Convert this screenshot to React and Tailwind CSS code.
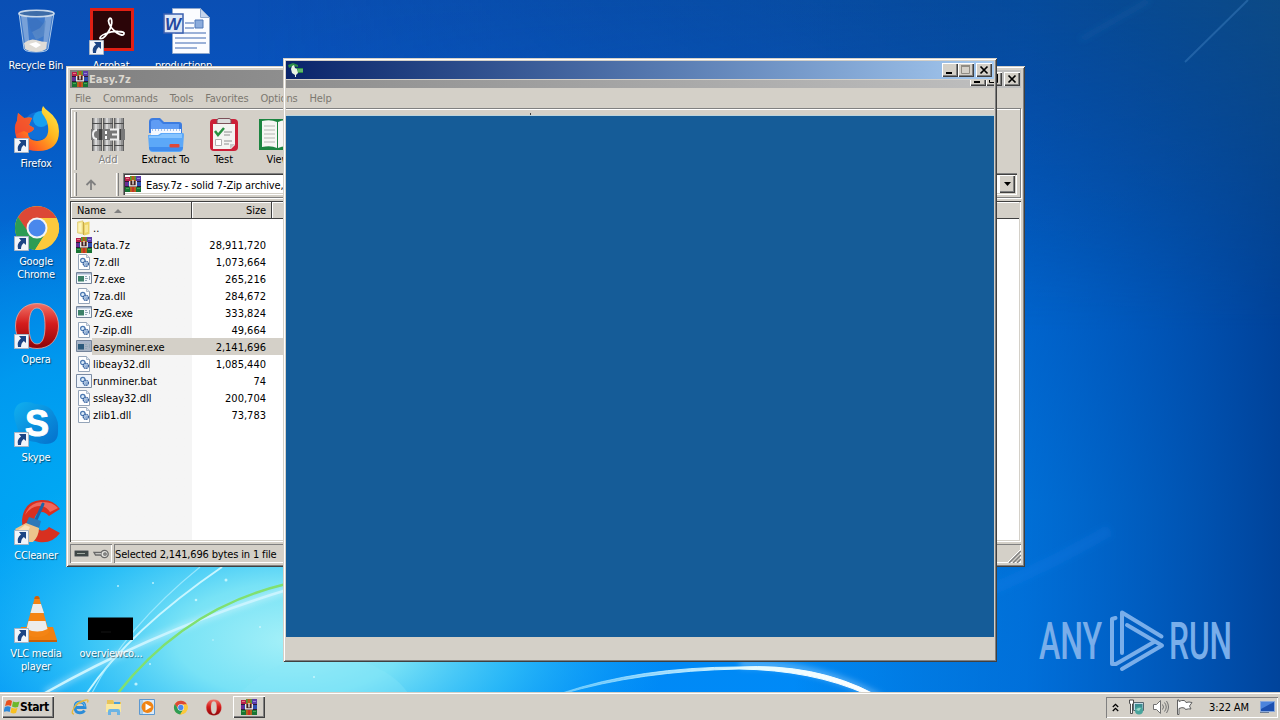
import clsx from 'clsx';

const RAISED = 'bg-[#d4d0c8] shadow-[inset_1px_1px_0_#fff,inset_-1px_-1px_0_#404040,inset_-2px_-2px_0_#808080]';
const SUNKEN = 'shadow-[inset_1px_1px_0_#808080,inset_-1px_-1px_0_#fff]';
const UI_FONT = "font-['DejaVu_Sans_Condensed','DejaVu_Sans',sans-serif] text-[11px] leading-[13px] tracking-[-0.1px]";

const FILES = [
    { name: '..', size: '', type: 'folder' },
    { name: 'data.7z', size: '28,911,720', type: 'rar' },
    { name: '7z.dll', size: '1,073,664', type: 'dll' },
    { name: '7z.exe', size: '265,216', type: 'exe' },
    { name: '7za.dll', size: '284,672', type: 'dll' },
    { name: '7zG.exe', size: '333,824', type: 'exe' },
    { name: '7-zip.dll', size: '49,664', type: 'dll' },
    { name: 'easyminer.exe', size: '2,141,696', type: 'exe', selected: true },
    { name: 'libeay32.dll', size: '1,085,440', type: 'dll' },
    { name: 'runminer.bat', size: '74', type: 'bat' },
    { name: 'ssleay32.dll', size: '200,704', type: 'dll' },
    { name: 'zlib1.dll', size: '73,783', type: 'dll' },
];

const MENU = ['File', 'Commands', 'Tools', 'Favorites', 'Options', 'Help'];

/* ---------- Wallpaper ---------- */

function Wallpaper() {
    return (
        <svg className="absolute inset-0" width="1280" height="720" viewBox="0 0 1280 720">
            <defs>
                <linearGradient id="sky" x1="0" y1="0" x2="0" y2="1">
                    <stop offset="0" stopColor="#0a4fb4" />
                    <stop offset="0.12" stopColor="#0853be" />
                    <stop offset="0.4" stopColor="#0072dc" />
                    <stop offset="0.7" stopColor="#0088ee" />
                    <stop offset="1" stopColor="#008af8" />
                </linearGradient>
                <linearGradient id="dim" x1="0" y1="0" x2="1" y2="0">
                    <stop offset="0.62" stopColor="#00408f" stopOpacity="0" />
                    <stop offset="0.8" stopColor="#004cb4" stopOpacity="0.42" />
                    <stop offset="1" stopColor="#003e94" stopOpacity="0.93" />
                </linearGradient>
                <linearGradient id="topdim" x1="0" y1="0" x2="1" y2="0">
                    <stop offset="0.2" stopColor="#034a98" stopOpacity="0" />
                    <stop offset="0.8" stopColor="#064a92" stopOpacity="0.7" />
                    <stop offset="1" stopColor="#0c4a86" />
                </linearGradient>
                <linearGradient id="fade" x1="0" y1="0" x2="0" y2="1">
                    <stop offset="0" stopColor="#fff" />
                    <stop offset="1" stopColor="#000" />
                </linearGradient>
                <mask id="topmask"><rect width="1280" height="330" fill="url(#fade)" /></mask>
                <radialGradient id="glow">
                    <stop offset="0" stopColor="#a4f0f8" />
                    <stop offset="0.3" stopColor="#7ee6f6" stopOpacity="0.95" />
                    <stop offset="0.6" stopColor="#36c6f8" stopOpacity="0.75" />
                    <stop offset="1" stopColor="#10a8fa" stopOpacity="0" />
                </radialGradient>
                <radialGradient id="left">
                    <stop offset="0" stopColor="#00acf4" stopOpacity="0.95" />
                    <stop offset="0.5" stopColor="#00a6f4" stopOpacity="0.7" />
                    <stop offset="1" stopColor="#00a0f0" stopOpacity="0" />
                </radialGradient>
                <linearGradient id="arc" x1="0" y1="0" x2="1" y2="0">
                    <stop offset="0" stopColor="#8fdcff" stopOpacity="0.6" />
                    <stop offset="0.6" stopColor="#e4faff" />
                    <stop offset="1" stopColor="#fff" />
                </linearGradient>
                <filter id="soft" x="-20%" y="-50%" width="140%" height="200%"><feGaussianBlur stdDeviation="3" /></filter>
                <filter id="soft1"><feGaussianBlur stdDeviation="0.6" /></filter>
            </defs>
            <rect width="1280" height="720" fill="url(#sky)" />
            <rect width="1280" height="720" fill="url(#dim)" />
            <rect width="1280" height="330" fill="url(#topdim)" mask="url(#topmask)" />
            <ellipse cx="90" cy="510" rx="330" ry="300" fill="url(#left)" />
            <ellipse cx="290" cy="640" rx="380" ry="190" fill="url(#glow)" />
            <path d="M1185 62L1248 0" stroke="#3f80c0" strokeOpacity="0.45" strokeWidth="2" filter="url(#soft1)" />
            <path d="M1080 40L1150 0" stroke="#2a70b8" strokeOpacity="0.25" strokeWidth="4" filter="url(#soft)" />
            <path d="M990 590Q1050 565 1110 530" fill="none" stroke="#2a90f8" strokeOpacity="0.15" strokeWidth="12" filter="url(#soft)" />
            {/* light streams around the bottom left */}
            <path d="M45 693Q160 628 290 589" fill="none" stroke="#fff" strokeOpacity="0.4" strokeWidth="6" filter="url(#soft)" />
            <path d="M45 693Q160 628 290 589" fill="none" stroke="#c8f4ff" strokeWidth="2.5" filter="url(#soft1)" />
            <path d="M87 693Q130 630 222 567" fill="none" stroke="#c8f6ff" strokeWidth="2" filter="url(#soft1)" />
            <path d="M92 693Q125 628 200 567" fill="none" stroke="#a8ecff" strokeOpacity="0.8" strokeWidth="1.2" />
            <path d="M118 693Q185 608 286 584" fill="none" stroke="#80e070" strokeWidth="2.5" filter="url(#soft1)" />
            <path d="M240 693Q262 670 290 662H365Q395 674 408 693Z" fill="#8ce8f8" fillOpacity="0.3" />
            <path d="M740 664Q815 663 880 698" fill="none" stroke="#fff" strokeOpacity="0.35" strokeWidth="7" filter="url(#soft)" />
            <path d="M562 693Q640 667 739 667Q815 663 874 694L866 694Q812 670 739 669Q640 671 562 694Z" fill="url(#arc)" stroke="url(#arc)" filter="url(#soft1)" />
            <g fill="#d8fbff" fillOpacity="0.8">
                <circle cx="226" cy="580" r="1.5" /><circle cx="196" cy="600" r="1.3" /><circle cx="136" cy="684" r="1.6" />
                <circle cx="118" cy="586" r="1" /><circle cx="153" cy="583" r="1" /><circle cx="150" cy="664" r="1" />
                <circle cx="260" cy="627" r="1" /><circle cx="213" cy="640" r="0.8" /><circle cx="314" cy="677" r="1" />
            </g>
        </svg>
    );
}

function Watermark() {
    return (
        <svg className="absolute left-[1030px] top-[595px] overflow-visible" width="220" height="90" viewBox="1030 595 220 90">
            <g fill="#79aeea" fontFamily="Roboto, sans-serif" fontSize="52" fontWeight="500">
                <text x="1039" y="659" textLength="63" lengthAdjust="spacingAndGlyphs">ANY</text>
                <text x="1169" y="659" textLength="63" lengthAdjust="spacingAndGlyphs">RUN</text>
            </g>
            <g fill="none" stroke="#79aeea" strokeWidth="4" strokeLinejoin="round" strokeLinecap="round">
                <path d="M1122 653V612.5L1161.500 636.500" />
                <path d="M1127 625L1162 645.500L1122 669" />
                <path d="M1115.500 618L1112 619V664L1116 664L1154 642" />
            </g>
        </svg>
    );
}

/* ---------- Icons ---------- */

function RarIcon() {
    return (
        <svg width="16" height="16" viewBox="0 0 16 16" className="shrink-0">
            <path fill="#b8204c" d="M0 1h16v4H0z" />
            <path fill="#5c3ca8" d="M10 0h6v5h-6z" />
            <path fill="#2c4cb0" d="M0 6h16v4H0z" />
            <path fill="#6c2c90" d="M0 6h3v4H0z" />
            <path fill="#187434" d="M0 11h16v5H0z" />
            <path fill="#48a850" d="M1 12h3v1H1zM12 12h3v1h-3z" />
            <path fill="#2c1c38" d="M0 5h16v1H0zM0 10h16v1H0z" />
            <path fill="#e87878" d="M1 2h3v1H1z" />
            <path fill="#9484d8" d="M12 2h3v1h-3z" />
            <path fill="#b8601c" d="M5 0h6v16H5z" />
            <path fill="#48a038" d="M5 0h1.500v4H5zM9.500 0H11v4H9.500z" />
            <path fill="#c83028" d="M7 11h2v5H7z" />
            <path fill="#402020" d="M4 5h8v6H4z" />
            <path fill="none" stroke="#f4f0ec" strokeWidth="1.300" d="M4.700 5v4.800h6.600V5M8 4v4.500" />
        </svg>
    );
}

function FileIcon({ type, selected }) {
    if (type === 'rar') return <RarIcon />;
    if (type === 'folder') {
        return (
            <svg width="16" height="16" viewBox="0 0 16 16" className="shrink-0">
                <path fill="#f4e48c" stroke="#d8c468" strokeWidth=".6" d="M1.500 2L7 .8V14l-5.500-1z" />
                <path fill="#ecd468" d="M7 3l6.500-1.500V14L8 15.500z" />
                <path fill="#fdf5bc" d="M2.500 3.500l3-1V12l-3-.4z" />
                <path fill="#f8e898" d="M9 5l3-.5V12l-3 .8z" />
                <path fill="#c8a848" d="M7 2h1v13H7z" />
            </svg>
        );
    }
    if (type === 'exe') {
        return (
            <svg width="16" height="16" viewBox="0 0 16 16" className="shrink-0">
                <path fill={selected ? '#a8b4c4' : '#f4f8fc'} stroke="#74849a" d="M.5 1.500h15v11H.5z" />
                <path fill="#a4b4cc" d="M1 2h14v1.500H1z" />
                <path fill={selected ? '#2c5a7c' : '#3c8068'} d="M2 5h6v5.500H2z" />
                <path fill="#94a8b8" d="M9 5h2v1H9zM9 7h3v1H9zM9 9h2v1H9zM13 5h1v4h-1z" />
            </svg>
        );
    }
    return (
        <svg width="16" height="16" viewBox="0 0 16 16" className="shrink-0">
            {type === 'bat'
                ? <path fill="#eef4fb" stroke="#7c8ca4" d="M.5 1.500h15v13H.5z" />
                : <path fill="#fff" stroke="#94a4b8" d="M2.500.5h8l3 3v12h-11z" />}
            {type !== 'bat' && <path fill="#dce6f0" stroke="#94a4b8" strokeWidth=".7" d="M10.500.5v3h3" />}
            <circle cx="6.800" cy="6.500" r="2.200" fill="#dcecfa" stroke="#4c78b0" strokeWidth="1.200" />
            <circle cx="9.800" cy="9.800" r="2.600" fill="#c4dcf4" stroke="#365f9c" strokeWidth="1.300" strokeDasharray="1.600 .5" />
            <circle cx="9.800" cy="9.800" r=".9" fill="#fff" stroke="#365f9c" strokeWidth=".5" />
        </svg>
    );
}

function AddIcon() {
    return (
        <svg width="36" height="36" viewBox="0 0 36 36">
            {[2, 13, 24].map((x) => (
                <g key={x}>
                    <path fill="#606060" d={`M${x} 1h10v33h-10z`} />
                    <path fill="#909090" d={`M${x + 1} 1h8v33h-8z`} />
                    <path fill="#b4b4b4" d={`M${x + 2} 1h5v33h-5z`} />
                    <path fill="#d8d8d8" d={`M${x + 3} 1h2v33h-2z`} />
                    <path fill="#4c4c4c" d={`M${x} 6h10v1h-10zM${x} 28h10v1h-10z`} />
                </g>
            ))}
            <path fill="#787878" d="M1 12h34v11H1z" />
            <path fill="none" stroke="#f0f0f0" strokeWidth="2" d="M7 13Q3 13 3 17.500T7 22M20 12.500h8v10h-8M22 17.500h6" />
            <path fill="#404040" d="M9 12h3v11H9zM30 12h1v11h-1z" />
            <path fill="#fff" d="M15 14h2v3h-2zM15 19h2v3h-2z" />
        </svg>
    );
}

function ExtractIcon() {
    return (
        <svg width="38" height="36" viewBox="0 0 38 36">
            <path fill="#3c7ce0" d="M2 5q0-4 4-4h7l4 4h15q3 0 3 3v8H2z" />
            <path fill="#5f9cf4" d="M4 5q0-2 3-2h5l4 4h16v5H4z" />
            <path fill="#f4f8ff" d="M4 12h30v8H4z" />
            <path stroke="#a4c0e8" strokeDasharray="1 2" strokeWidth="2" d="M5 13h28" />
            <path fill="#5ca8f8" d="M1 18h10l3-2h22q1 0 1 2l-1 13q0 4-4 4H6q-4 0-4-4z" />
            <path fill="#86c4ff" d="M2 19h10l3-2h20v4H2z" />
            <path fill="#3f8cee" d="M2 30h34q0 4-4 4H6q-4 0-4-4z" />
            <rect x="22.500" y="27" width="10" height="3.600" rx="1" fill="#e04838" />
        </svg>
    );
}

function TestIcon() {
    return (
        <svg width="30" height="36" viewBox="0 0 30 36">
            <rect x="1" y="2" width="28" height="32" rx="4" fill="#cc2038" />
            <path fill="#f4f4f2" d="M4 7h22v21l-4 4H4z" />
            <path fill="#c8c8c8" d="M26 27l-5 5v-5z" />
            <path fill="#dcdcdc" stroke="#7c5058" d="M8 3.500q0-2 2-2h10q2 0 2 2v3H8z" />
            <path fill="none" stroke="#289040" strokeWidth="2.500" d="M6 14l3 4 6-7" />
            <path stroke="#909090" strokeWidth="1.200" d="M15 15h8M15 18h6M15 24h8M15 27h5" />
            <path fill="#fff" stroke="#b0b0b0" d="M6.500 22.500h6v6h-6z" />
        </svg>
    );
}

function ViewIcon() {
    return (
        <svg width="38" height="36" viewBox="0 0 38 36">
            <path fill="#1c8440" d="M0 2h38v31H0z" />
            <path fill="#f6f6f4" d="M3 4q9-2 15 1v26q-6-3-15-1zM33 4q-9-2-14 1v26q6-3 14-1z" />
            <path stroke="#b4b8b4" d="M5 9h11M5 13h11M5 17h11M5 21h11M5 25h11" />
            <path fill="#d83038" d="M24 1h5v13h-5z" />
        </svg>
    );
}

function ShortcutBadge() {
    return (
        <svg className="absolute left-0.5 bottom-0" width="15" height="15" viewBox="0 0 15 15">
            <path fill="#f2f5fa" stroke="#a8b4c4" d="M.5.5h14v14H.5z" />
            <path fill="#1c4484" d="M5 2h7v7L9.800 7Q7 9 7 13H4Q2.500 7.500 7 4.500z" />
        </svg>
    );
}

function RecycleArt() {
    return (
        <svg width="48" height="48" viewBox="0 0 48 48">
            <path fill="#6fa0dc" fillOpacity=".5" stroke="#a9c8ea" d="M7 5l5 36q1 3 12 3t12-3l6-36z" />
            <path fill="#e8eef4" fillOpacity=".35" d="M9 8l5 34 4 1L15 8zM33 8l-2 34 4-1 5-33z" />
            <path fill="#3b70bc" fillOpacity=".6" d="M16 12l8-2 8 6-5 12-8-5z" />
            <path fill="#5c8cc8" fillOpacity=".7" d="M20 24l8-4 6-8-2 16-8 4z" />
            <path fill="#dfdcd6" d="M12 35q6-5 12-3t11 2l-1 7q-4 3-10 3t-11-3z" />
            <path fill="#fff" d="M17 36l7-2 5 3-5 3z" />
            <ellipse cx="24.500" cy="5.500" rx="17.500" ry="3.200" fill="#3d6ca8" stroke="#c8d8ea" strokeWidth="1.600" />
        </svg>
    );
}

function AcrobatArt() {
    return (
        <svg width="48" height="48" viewBox="0 0 48 48">
            <path fill="#e01f14" d="M3 0h44v43H3z" />
            <path fill="#2b0508" d="M6 3h38v37H6z" />
            <path fill="none" stroke="#fff" strokeWidth="1.800" strokeLinejoin="round" d="M13 30.500Q12.500 28 19 25.500T31 23.500Q38 23.500 37 26T30 25Q22 19 21.500 13 22 9.500 24 10.500 26 13.500 23 21 17 32 13 30.500z" />
        </svg>
    );
}

function WordDocArt() {
    return (
        <svg width="48" height="48" viewBox="0 0 48 48">
            <path fill="#fbfcff" stroke="#90a8cc" d="M9.500.5h28l9 9v36h-37z" />
            <path fill="#c4d4ec" stroke="#90a8cc" d="M37.500.5v9h9z" />
            <path stroke="#7c98cc" strokeWidth="1.300" d="M22 15h9M22 20h9M12 25h31M12 30h31M12 35h31M12 40h22" />
            <path fill="#8cacdc" stroke="#5078b8" d="M32 12h8v8h-8z" />
            <path fill="#dfe8f6" stroke="#3c60b0" strokeWidth="1.500" d="M1 6h19v19H1z" />
            <text x="2" y="21.500" fill="#2448a0" fontFamily="'Liberation Sans', sans-serif" fontStyle="italic" fontWeight="700" fontSize="17">W</text>
        </svg>
    );
}

function FirefoxArt() {
    return (
        <svg width="48" height="48" viewBox="0 0 48 48">
            <defs>
                <linearGradient id="fox" x1="1" y1="0" x2="0" y2="1">
                    <stop offset="0" stopColor="#fff44f" />
                    <stop offset=".4" stopColor="#ffb820" />
                    <stop offset=".7" stopColor="#ff6c20" />
                    <stop offset="1" stopColor="#e82848" />
                </linearGradient>
            </defs>
            <circle cx="26" cy="20" r="14" fill="#1070d8" />
            <circle cx="29" cy="13" r="8" fill="#18a0f0" />
            <path fill="url(#fox)" d="M31 0q3 4 5 5 11 8 11 20 0 20-21 20Q5 45 3 25q0-7 2-10l1-8 6 5q6-1 8 0l-3 7 5 3q0 3-6 5 0 7 9 8 13-1 11-15-1-6-4-10-4-4-1-10z" />
            <path fill="#f04830" fillOpacity=".8" d="M5 15l1-8 6 5q6-1 8 0l-3 7 5 3q0 3-6 5l-4-2-8 3q-3-7 1-13z" />
        </svg>
    );
}

function ChromeArt({ size = 48 }) {
    return (
        <svg width={size} height={size} viewBox="0 0 48 48">
            <circle cx="25" cy="24" r="22" fill="#fbc93c" />
            <path fill="#dc4836" d="M6 13A22 22 0 0 1 44.500 14H25L16 29z" />
            <path fill="#2c9c54" d="M6 13A22 22 0 0 0 23 46L34 28.500H16.500z" />
            <path fill="#fbc93c" d="M44.500 14A22 22 0 0 1 23 46l11-17.500V14z" />
            <circle cx="25" cy="24" r="10.500" fill="#f4f4f4" />
            <circle cx="25" cy="24" r="8.500" fill="#4a88ec" />
        </svg>
    );
}

function OperaArt({ size = 48 }) {
    return (
        <svg width={size} height={size} viewBox="0 0 48 48">
            <defs>
                <linearGradient id="op" x1="0" y1="0" x2="0" y2="1">
                    <stop offset="0" stopColor="#f07468" />
                    <stop offset=".45" stopColor="#d41c1c" />
                    <stop offset="1" stopColor="#8c0408" />
                </linearGradient>
            </defs>
            <path fillRule="evenodd" fill="url(#op)" stroke="#e8a8a0" strokeWidth=".8" d="M25 1.500C38.500 1.500 46.500 11 46.500 24S38.500 46.500 25 46.500 3.500 37 3.500 24 11.500 1.500 25 1.500zM25 6C19 6 17 14 17 24s2 18 8 18 8-8 8-18-2-18-8-18z" />
        </svg>
    );
}

function SkypeArt() {
    return (
        <svg className="overflow-visible" width="48" height="48" viewBox="0 0 48 48">
            <defs>
                <linearGradient id="sk" x1="0" y1="0" x2="1" y2="1">
                    <stop offset="0" stopColor="#10b0f0" />
                    <stop offset="1" stopColor="#0470cc" />
                </linearGradient>
            </defs>
            <path fill="url(#sk)" d="M14 2q6 0 9 2 15 0 19 10 5 6 4 18 0 12-13 12-5 0-9-2Q8 41 5 27 2 20 2 14 3 2 14 2z" />
            <text x="13" y="35.500" fill="#fff" stroke="#fff" strokeWidth="1" fontFamily="'Liberation Sans', sans-serif" fontWeight="700" fontSize="37" textLength="24" lengthAdjust="spacingAndGlyphs">S</text>
        </svg>
    );
}

function CCleanerArt() {
    return (
        <svg width="48" height="48" viewBox="0 0 48 48">
            <path fill="#d83020" d="M48 11Q41 1 29 2 12 3 10 22q0 19 17 22 13 2 21-9l-11-6q-4 5-9 3-6-2-6-9 1-9 8-9 3 0 7 4z" />
            <path fill="#f0685c" d="M46 10Q40 3 29 4 17 5 13 17q6-9 15-9 6 0 10 6z" />
            <path stroke="#1c64a8" strokeWidth="3" strokeLinecap="round" d="M31 6L24 22" />
            <path fill="#2c78b8" d="M17 19l12 4-2 7-13-4z" />
            <path fill="#ecc48c" d="M14 25l13 5q0 8-6 14H10Q6 34 3 31z" />
            <path fill="#fae0b8" d="M13 27l5 2-6 13-7-9z" />
        </svg>
    );
}

function VlcArt() {
    return (
        <svg width="48" height="48" viewBox="0 0 48 48">
            <path fill="#f08010" d="M9 31h32l4 13H5z" />
            <path fill="#c86008" d="M5 44h40v2H5z" />
            <path fill="#f48414" d="M23 1q2-2 4 0l10 35q-3 5-12 5t-12-5z" />
            <path fill="#ececec" d="M21 8h8l3 9H18.500zM16.500 25h17l2 8q-10 5-21 0z" />
            <path fill="#d06008" d="M22.800 1q2.200-2 4.400 0l.5 2h-5.500z" />
        </svg>
    );
}

function ConsoleArt() {
    return (
        <svg width="48" height="48" viewBox="0 0 48 48">
            <path fill="#000" d="M1 21.500h45V44H1z" />
            <path stroke="#141414" d="M14 36h10" />
        </svg>
    );
}

/* ---------- Desktop ---------- */

const COLUMNS = [
    {
        pos: 'left-0',
        items: [
            { label: 'Recycle Bin', Art: RecycleArt },
            { label: 'Firefox', Art: FirefoxArt, link: true },
            { label: 'Google Chrome', Art: ChromeArt, link: true },
            { label: 'Opera', Art: OperaArt, link: true },
            { label: 'Skype', Art: SkypeArt, link: true },
            { label: 'CCleaner', Art: CCleanerArt, link: true },
            { label: 'VLC media player', Art: VlcArt, link: true },
        ],
    },
    {
        pos: 'left-[75px]',
        items: [
            { label: 'Acrobat', Art: AcrobatArt, link: true },
            null, null, null, null, null,
            { label: 'overviewco...', Art: ConsoleArt },
        ],
    },
    { pos: 'left-[151px]', items: [{ label: 'productionp...', Art: WordDocArt }] },
];

function DesktopIcon({ item }) {
    if (!item) return <div className="h-[98px]" />;
    const { label, Art, link } = item;
    return (
        <div className="h-[98px] pt-2 flex flex-col items-center">
            <div className="relative w-12 h-[47px] shrink-0">
                <Art />
                {link && <ShortcutBadge />}
            </div>
            <div className="mt-1 w-[72px] px-1 text-center tracking-[-0.2px] text-white [text-shadow:1px_1px_1px_#0008]">
                {label}
            </div>
        </div>
    );
}

function CaptionButton({ kind, disabled }) {
    return (
        <div className={clsx('w-4 h-[14px] shrink-0', RAISED)}>
            <svg width="16" height="14" viewBox="0 0 16 14" fill="none">
                {kind === 'min' && <path fill="#000" d="M4 9h6v2H4z" />}
                {kind === 'max' && <path stroke={disabled ? '#908c84' : '#000'} d="M3.500 3v7.500h8V3M3 2.500h9M3 3.500h9" />}
                {kind === 'close' && <path stroke="#000" strokeWidth="1.700" d="M4.500 3.500l7 7M11.500 3.500l-7 7" />}
            </svg>
        </div>
    );
}

/* ---------- Archive window ---------- */

function Grip() {
    return <div className="w-[3px] shrink-0 self-stretch border-l border-white border-r border-r-[#808080]" />;
}

function ToolButton({ label, width, disabled, children }) {
    return (
        <div className={clsx('flex flex-col items-center shrink-0 pt-[5px]', width)}>
            <div className="h-9">{children}</div>
            <span className={clsx('whitespace-nowrap', disabled ? 'text-[#808080] [text-shadow:1px_1px_0_#fff]' : 'text-black')}>{label}</span>
        </div>
    );
}

function ArchiveWindow() {
    return (
        <div className="absolute left-[66px] top-[66px] w-[959px] h-[501px] p-1 flex flex-col bg-[#d4d0c8] shadow-[inset_1px_1px_0_#d4d0c8,inset_-1px_-1px_0_#404040,inset_2px_2px_0_#fff,inset_-2px_-2px_0_#808080]">
            {/* Title bar */}
            <div className="h-[18px] shrink-0 flex items-center gap-px pl-0.5 pr-px bg-linear-to-r from-[#808080] to-[#c0c0c0]">
                <RarIcon />
                <span className="flex-1 font-bold text-[#dcd8d0] tracking-[0.1px]">Easy.7z</span>
                <div className="flex">
                    <CaptionButton kind="min" />
                    <CaptionButton kind="max" />
                    <div className="w-0.5" />
                    <CaptionButton kind="close" />
                </div>
            </div>

            {/* Menu */}
            <div className="h-5 shrink-0 flex items-center gap-3 pl-[5px] tracking-[-0.15px] text-[#7c7870]">
                {MENU.map((m) => <span key={m}>{m}</span>)}
            </div>

            {/* Toolbars */}
            <div className="h-[90px] shrink-0 border border-[#808080] shadow-[inset_1px_1px_0_#fff,1px_1px_0_#fff] p-[3px] pb-px flex flex-col justify-between">
                <div className="h-[58px] flex">
                    <Grip />
                    <ToolButton label="Add" width="w-[62px]" disabled><AddIcon /></ToolButton>
                    <ToolButton label="Extract To" width="w-[53px]"><ExtractIcon /></ToolButton>
                    <ToolButton label="Test" width="w-[63px]"><TestIcon /></ToolButton>
                    <ToolButton label="View" width="w-[46px]"><ViewIcon /></ToolButton>
                </div>
                <div className="h-[23px] flex items-center">
                    <Grip />
                    <svg className="mx-2" width="12" height="12" viewBox="0 0 12 12" fill="none" stroke="#808080" strokeWidth="1.800">
                        <path d="M6 11V1.500M1.500 6L6 1.500 10.500 6" />
                    </svg>
                    <div className="w-[11px]" />
                    <Grip />
                    <div className="ml-1 flex-1 h-[22px] mt-[-1px] bg-white flex items-center p-0.5 shadow-[inset_1px_1px_0_#808080,inset_2px_2px_0_#404040,inset_-1px_-1px_0_#fff,inset_-2px_-2px_0_#d4d0c8]">
                        <RarIcon />
                        <span className="flex-1 pl-[5px] pt-0.5 text-black">Easy.7z - solid 7-Zip archive, unpacked size</span>
                        <div className={clsx('w-4 h-[18px] flex items-center justify-center', RAISED)}>
                            <svg width="7" height="4" viewBox="0 0 7 4"><path d="M0 0h7L3.500 4z" /></svg>
                        </div>
                    </div>
                </div>
            </div>

            {/* File list */}
            <div className="mt-[3px] h-[341px] shrink-0 flex flex-col bg-white p-0.5 pt-px text-black shadow-[inset_1px_1px_0_#404040,inset_-1px_-1px_0_#fff,inset_-2px_-2px_0_#d4d0c8]">
                <div className="h-[17px] shrink-0 flex bg-[#d4d0c8] border-b border-[#404040] shadow-[inset_0_1px_0_#fff]">
                    <div className="w-[120px] pl-[5px] pt-px flex items-center gap-2 border-r border-[#404040]">
                        Name
                        <svg width="8" height="4" viewBox="0 0 8 4"><path fill="#808080" d="M0 4h8L4 0z" /></svg>
                    </div>
                    <div className="w-20 pr-[5px] pt-px flex items-center justify-end border-l border-l-white border-r border-r-[#404040]">Size</div>
                    <div className="flex-1 border-l border-white" />
                </div>
                <div className="flex-1 bg-linear-to-r from-[#f5f5f5] from-[120px] to-white to-[120px]">
                    {FILES.map((f) => (
                        <div key={f.name} className="h-[17px] w-[640px] flex items-center pl-1">
                            <FileIcon type={f.type} selected={f.selected} />
                            <div className={clsx('h-[17px] flex-1 flex items-center pl-px pt-px', f.selected && 'bg-[#d4d0c8]')}>
                                <span className="w-[99px] tracking-[0px]">{f.name}</span>
                                <span className="w-[74px] text-right tracking-[0px]">{f.size}</span>
                            </div>
                        </div>
                    ))}
                </div>
            </div>

            {/* Status bar */}
            <div className="mt-0.5 flex-1 flex gap-0.5">
                <div className={clsx('w-[42px] flex items-center gap-1 pl-1', SUNKEN)}>
                    <svg width="15" height="7" viewBox="0 0 15 7">
                        <rect x=".5" y=".5" width="14" height="6" rx="1" fill="#404848" stroke="#909090" />
                        <path stroke="#a0a8a0" d="M3 3.500h8" />
                    </svg>
                    <svg width="16" height="10" viewBox="0 0 16 10" fill="none" stroke="#686868" strokeWidth="1.300">
                        <circle cx="11.500" cy="5" r="3.700" fill="#e4e4e0" />
                        <circle cx="12" cy="5" r="1.200" />
                        <path d="M8 3.500H1L2.500 6H8" fill="#e4e4e0" />
                    </svg>
                </div>
                <div className={clsx('flex-1 flex items-center justify-between pl-px pt-px tracking-[-0.15px] text-black', SUNKEN)}>
                    Selected 2,141,696 bytes in 1 file
                    <svg className="self-end" width="13" height="13" viewBox="0 0 13 13">
                        <path stroke="#808080" strokeWidth="1.500" d="M1 13L13 1M5 13l8-8M9 13l4-4" />
                        <path stroke="#fff" d="M0 12L12 0" />
                    </svg>
                </div>
            </div>
        </div>
    );
}

/* ---------- Miner window, still painting: the strip under its caption is see-through ---------- */

function MinerWindow() {
    return (
        <div className="absolute left-[283px] top-[58px] w-[714px] h-[604px] p-[3px] pr-[2px] flex flex-col shadow-[inset_1px_1px_0_#d4d0c8,inset_-1px_-1px_0_#404040,inset_2px_2px_0_#fff,inset_-2px_-2px_0_#808080,inset_0_0_0_3px_#d4d0c8]">
            <div className="mr-px h-[18px] shrink-0 flex items-center justify-between pl-0.5 pr-0.5 bg-linear-to-r from-[#0a246a] to-[#a6caf0]">
                <svg width="16" height="16" viewBox="0 0 16 16">
                    <path fill="#2c8c48" d="M0 3l5-2 5 2v2L5 4 1 6zM8 6h7v5H8z" />
                    <path fill="#60b868" d="M10 7h5v3h-5z" />
                    <path fill="#e8f4e4" d="M4 4l2-1 1 3 2 1 1 4-2 2v2H7v-2l-3-2-1-4z" />
                </svg>
                <div className="flex">
                    <CaptionButton kind="min" />
                    <CaptionButton kind="max" disabled />
                    <div className="w-0.5" />
                    <CaptionButton kind="close" />
                </div>
            </div>
            <div className="mr-px h-px shrink-0 bg-[#d4d0c8]" />
            <div className="mr-px h-[30px] shrink-0" />
            <div className="mr-px h-1.5 shrink-0 bg-[#d4d0c8] border-b border-[#bcd4dc] flex items-end pl-[244px]">
                <div className="w-px h-0.5 bg-[#404040]" />
            </div>
            <div className="mr-px h-[521px] shrink-0 bg-[#155c98]" />
            <div className="mr-px flex-1 mb-[-1px] bg-[#d4d0c8]" />
        </div>
    );
}

/* ---------- Taskbar ---------- */

function IeIcon() {
    return (
        <svg width="18" height="18" viewBox="0 0 18 18" fill="none">
            <path stroke="#2c8cd8" strokeWidth="3" d="M4.500 9.500H14Q14 4 9 4T4 9.500t5 5.200q3 0 4.500-2.200" />
            <path stroke="#7cc8f4" strokeWidth=".8" d="M4 8.500Q4.500 4 9 4t5 4.500" />
            <path stroke="#e8b838" strokeWidth="1.300" d="M3 16Q-.5 16 3 10T15 2q3-1 1.500 2.500" />
        </svg>
    );
}

function ExplorerIcon() {
    return (
        <svg width="18" height="18" viewBox="0 0 18 18">
            <path fill="#e8c458" d="M2 2h6l1 2h7v10H2z" />
            <path fill="#4ca0d8" d="M9 4h6v3H9z" />
            <path fill="#fae8a0" d="M1 6h15v8H1z" />
            <path fill="#6cb4e4" d="M3 17v-4q0-2 2-2h8q2 0 2 2v4h-3v-3H6v3z" />
        </svg>
    );
}

function PlayerIcon() {
    return (
        <svg width="18" height="18" viewBox="0 0 18 18">
            <path fill="#dceaf8" stroke="#5c98d0" d="M1.500 1.500h15v15h-15z" />
            <path fill="#a8cce8" d="M2 2h3v14H2z" />
            <circle cx="9.500" cy="9" r="6" fill="#f08414" />
            <path fill="#fff" d="M7.500 5.500l6 3.500-6 3.500z" />
        </svg>
    );
}

function Taskbar() {
    return (
        <div className="absolute left-0 bottom-0 w-full h-7 bg-[#d4d0c8] border-t border-[#d4d0c8] shadow-[inset_0_1px_0_#fff] flex items-center justify-between pl-0.5 pr-0.5 pt-[3px] pb-0.5 text-black">
            <div className="flex items-center h-full">
                <div className={clsx('w-[52px] h-[22px] flex items-center pl-0.5 font-bold text-[12px] tracking-[-0.4px]', RAISED)}>
                    <svg width="16" height="16" viewBox="0 0 16 16">
                        <path fill="#e8501c" d="M2.500 2q3-2 5.500 0L7 7Q4.500 5.500 1 7z" />
                        <path fill="#6cb82c" d="M9 2.500q3 1.500 6.500 0l-1.500 5.500q-3 1-6-.500z" />
                        <path fill="#2c88d8" d="M.8 8q3-1.500 5.900 0l-1 5Q3 11.500-.5 13z" />
                        <path fill="#f8c020" d="M7.500 8.500q3 1.500 6 .500l-1.500 5q-3 1-5.500-.500z" />
                    </svg>
                    Start
                </div>
                <div className="flex items-center gap-[15.500px] pl-[17px] pr-[11px]">
                    <IeIcon />
                    <ExplorerIcon />
                    <PlayerIcon />
                    <div className="w-[18px] flex justify-center"><ChromeArt size={15} /></div>
                    <OperaArt size={17} />
                </div>
                <div className={clsx('w-8 h-[22px] flex items-center justify-center', RAISED)}>
                    <RarIcon />
                </div>
            </div>

            {/* Tray */}
            <div className={clsx('w-[172px] h-[21px] flex items-center pl-[6px] pr-[2px]', SUNKEN)}>
                <svg width="7" height="9" viewBox="0 0 7 9" fill="none" stroke="#000" strokeWidth="1.300">
                    <path d="M.8 4L3.500 1.300 6.200 4M.8 8l2.700-2.700L6.200 8" />
                </svg>
                <svg className="ml-[9px]" width="17" height="16" viewBox="0 0 17 16">
                    <path fill="#c4dce8" stroke="#586870" d="M5.500 3.500h10v8h-10z" />
                    <path fill="#3c8c90" d="M7 5h7.500v5H7z" />
                    <circle cx="11" cy="11.500" r="4" fill="#48a49c" />
                    <path fill="#98d8c8" d="M8 11q2-3 5-2l-2 3z" />
                    <path fill="#fff" stroke="#404040" strokeWidth=".9" d="M1.500 1v3q0 1 1 1v9.500h2V5q1 0 1-1V1z" />
                </svg>
                <svg className="ml-[7px]" width="18" height="16" viewBox="0 0 18 16" fill="none" stroke="#707070">
                    <path fill="#fff" d="M1.500 5.500h3l4-4v13l-4-4h-3z" />
                    <path d="M10.500 5.500q2 2.500 0 5M12.500 3.500q3.500 4.500 0 9M14.500 2q4 6 0 12" />
                </svg>
                <svg className="ml-[6px]" width="17" height="16" viewBox="0 0 17 16" fill="#fff" stroke="#606060">
                    <path d="M1.500 1v14.500h1.500V9.500q3-1.500 5.500-.5l1 1.500q3-1 5.500-.5L13.500 7 16 3.500q-3-1-6 0L8.500 1.500Q5.500 1 3 2.500V1z" />
                </svg>
                <span className="ml-4 w-[42px] whitespace-nowrap">3:22 AM</span>
                <svg className="ml-auto" width="17" height="15" viewBox="0 0 17 15">
                    <path fill="#1c50b0" stroke="#88a8dc" d="M1.500 1.500h14v10h-14z" />
                    <path fill="#4c84dc" d="M2 2h13L2 9z" />
                    <path fill="#6c7c94" d="M1 12h9v1H1z" />
                </svg>
            </div>
        </div>
    );
}

export default function App() {
    return (
        <div className={clsx('relative w-[1280px] h-[720px] overflow-hidden bg-[#0068d0]', UI_FONT)}>
            <Wallpaper />
            <Watermark />
            {COLUMNS.map((col) => (
                <div key={col.pos} className={clsx('absolute top-0 w-[72px] flex flex-col', col.pos)}>
                    {col.items.map((item, i) => <DesktopIcon key={i} item={item} />)}
                </div>
            ))}
            <ArchiveWindow />
            <MinerWindow />
            <Taskbar />
        </div>
    );
}
